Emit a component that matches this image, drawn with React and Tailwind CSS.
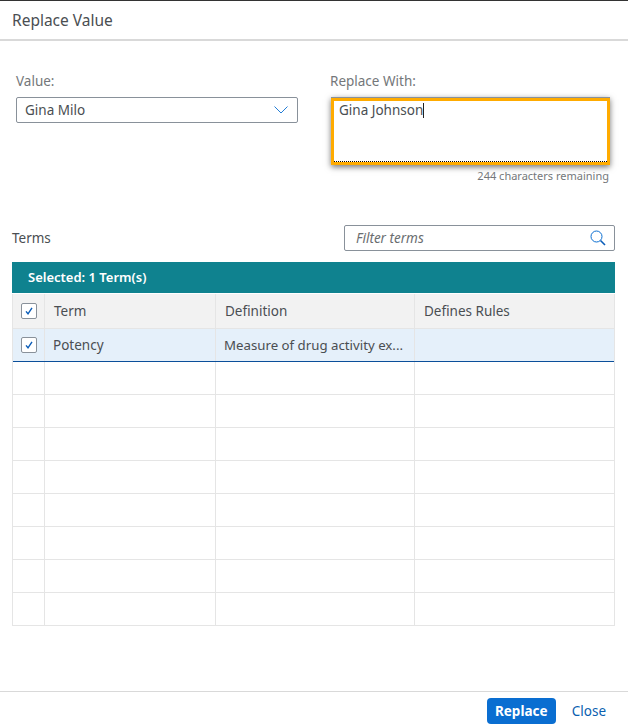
const FONT = { fontFamily: '"Noto Sans", sans-serif' }

const COLS = 'grid grid-cols-[32px_171px_199px_1fr]'

function CheckBox() {
  return (
    <span className="flex h-4 w-4 items-center justify-center rounded-[2px] border border-[#89919a] bg-white">
      <svg width="10" height="10" viewBox="0 0 10 10" fill="none">
        <path d="M2 5.4 L4 7.8 L8 1.8" stroke="#0a5cb8" strokeWidth="1.4" />
      </svg>
    </span>
  )
}

function EmptyRow() {
  return (
    <div className={`${COLS} h-[33px] border-b border-[#e5e5e5]`}>
      <div className="border-r border-[#e5e5e5]" />
      <div className="border-r border-[#e5e5e5]" />
      <div className="border-r border-[#e5e5e5]" />
      <div />
    </div>
  )
}

export default function App() {
  return (
    <div style={FONT} className="flex h-[728px] w-[628px] flex-col overflow-hidden border-t border-[#333] bg-white text-[13.5px] text-[#4a4e52]">
      {/* Title */}
      <div className="flex h-[40px] shrink-0 items-center border-b-2 border-[#d9d9d9] pl-3 pt-[2px] text-[15.5px] leading-none text-[#4a4e52]">
        Replace Value
      </div>

      {/* Value fields */}
      <div className="flex pl-4 pt-[31px]">
        <div className="w-[282px]">
          <div className="mb-[7px] h-[18px] leading-[18px] text-[#74777a]">Value:</div>
          <div className="flex h-[26px] items-center justify-between rounded-[2px] border border-[#89919a] pl-[8px] pr-[9px]">
            <span>Gina Milo</span>
            <svg width="14" height="8" viewBox="0 0 14 8" fill="none">
              <path d="M0.5 0.5 L7 7 L13.5 0.5" stroke="#0a6ed1" strokeWidth="0.9" />
            </svg>
          </div>
        </div>
        <div className="ml-[32px] w-[280px]">
          <div className="mb-[7px] h-[18px] leading-[18px] text-[#74777a]">Replace With:</div>
          <div className="ml-px h-[68px] border-t border-[#89919a] shadow-[0_2px_6px_rgba(0,0,0,0.55)]">
            <div className="h-[67px] border-[3px] border-[#ffab00]">
              <div className="h-full border-b border-dotted border-black pl-[5px]">
                <div className="flex h-[18px] items-center">
                  <span>Gina Johnson</span>
                  <span className="h-[15px] w-px bg-[#222]" />
                </div>
              </div>
            </div>
          </div>
          <div className="mt-[3px] pr-[1px] text-right text-[11px] leading-[16px] text-[#74777a]">244 characters remaining</div>
        </div>
      </div>

      {/* Terms toolbar */}
      <div className="flex items-center justify-between pl-3 pr-[13px] pt-[41px]">
        <span>Terms</span>
        <div className="flex h-[26px] w-[271px] items-center justify-between rounded-[2px] border border-[#89919a] pl-[11px] pr-[8px]">
          <span className="italic text-[#6a6d70]">Filter terms</span>
          <svg width="16" height="16" viewBox="0 0 16 16" fill="none">
            <circle cx="6.5" cy="6.5" r="5.5" stroke="#0a6ed1" strokeWidth="1" />
            <path d="M10.5 10.5 L15 15" stroke="#0a5cb8" strokeWidth="1.6" />
          </svg>
        </div>
      </div>

      {/* Table */}
      <div className="ml-3 mr-[13px] mt-[11px]">
        <div className="flex h-[31px] items-center bg-[#0f828f] pl-4 text-[13px] font-semibold text-white">
          Selected: 1 Term(s)
        </div>
        <div className="border-x border-[#e5e5e5]">
          <div className={`${COLS} mt-px h-[35px] border-b border-[#e5e5e5] bg-[#f2f2f2]`}>
            <div className="flex items-center justify-center border-r border-[#e5e5e5]"><CheckBox /></div>
            <div className="flex items-center border-r border-[#e5e5e5] pl-[9px]">Term</div>
            <div className="flex items-center border-r border-[#e5e5e5] pl-[9px]">Definition</div>
            <div className="flex items-center pl-[9px]">Defines Rules</div>
          </div>
          <div className={`${COLS} h-[33px] border-b border-[#0b4f9a] bg-[#e5f0fa]`}>
            <div className="flex items-center justify-center border-r border-[#e5e5e5]"><CheckBox /></div>
            <div className="flex items-center border-r border-[#e5e5e5] pl-[8px] pt-px">Potency</div>
            <div className="flex items-center border-r border-[#e5e5e5] pl-[8px] pt-px text-[13.25px]">Measure of drug activity ex...</div>
            <div />
          </div>
          {[1, 2, 3, 4, 5, 6, 7, 8].map((n) => (
            <EmptyRow key={n} />
          ))}
        </div>
      </div>

      {/* Footer */}
      <div className="mt-auto flex h-[37px] shrink-0 items-center justify-end gap-4 border-t border-[#d9d9d9] pr-[21px] pt-[2px]">
        <button className="flex h-[26px] w-[69px] items-center justify-center rounded-[4px] bg-[#0a6ed1] font-bold text-white">
          Replace
        </button>
        <span className="mr-px text-[#0a5fb0]">Close</span>
      </div>
    </div>
  )
}
